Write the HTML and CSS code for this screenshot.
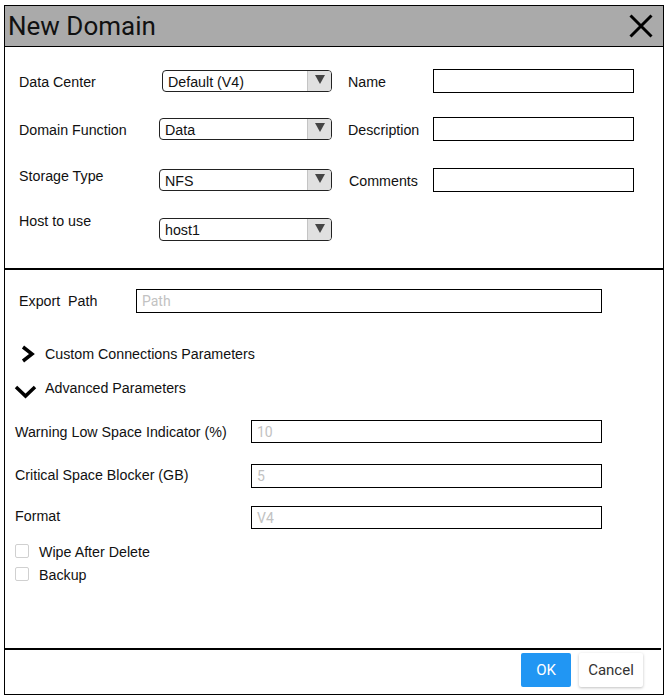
FILE: index.html
```html
<!DOCTYPE html>
<html>
<head>
<meta charset="utf-8">
<link rel="stylesheet" href="styles.css">
</head>
<body>
<div class="dialog">
  <div class="header">
    <span class="title">New Domain</span>
    <svg class="close" width="24" height="24" viewBox="0 0 24 24"><path d="M1.5 1.5 L22.5 22.5 M22.5 1.5 L1.5 22.5" stroke="#000" stroke-width="3" fill="none"/></svg>
  </div>

  <div class="top">
    <div class="row r1">
      <div class="lbl">Data Center</div>
      <div class="select s-dc"><span class="sv">Default (V4)</span><span class="arrow"><svg width="10" height="9" viewBox="0 0 10 9"><path d="M0 0 L10 0 L5 9 Z" fill="#444"/></svg></span></div>
      <div class="lbl2">Name</div>
      <div class="inp"></div>
    </div>
    <div class="row r2">
      <div class="lbl">Domain Function</div>
      <div class="select"><span class="sv">Data</span><span class="arrow"><svg width="10" height="9" viewBox="0 0 10 9"><path d="M0 0 L10 0 L5 9 Z" fill="#444"/></svg></span></div>
      <div class="lbl2">Description</div>
      <div class="inp"></div>
    </div>
    <div class="row r3">
      <div class="lbl lbl-high">Storage Type</div>
      <div class="select"><span class="sv">NFS</span><span class="arrow"><svg width="10" height="9" viewBox="0 0 10 9"><path d="M0 0 L10 0 L5 9 Z" fill="#444"/></svg></span></div>
      <div class="lbl2 lbl-c">Comments</div>
      <div class="inp"></div>
    </div>
    <div class="row r4">
      <div class="lbl lbl-higher">Host to use</div>
      <div class="select s-host"><span class="sv">host1</span><span class="arrow"><svg width="10" height="9" viewBox="0 0 10 9"><path d="M0 0 L10 0 L5 9 Z" fill="#444"/></svg></span></div>
    </div>
  </div>

  <div class="bottom">
    <div class="export">
      <div class="elbl">Export&nbsp; Path</div>
      <div class="binp export-inp"><span class="ph">Path</span></div>
    </div>
    <div class="toggle t-custom">
      <svg width="14" height="18" viewBox="0 0 14 18"><path d="M2 2 L11 9 L2 16" stroke="#000" stroke-width="3.5" fill="none"/></svg>
      <span>Custom Connections Parameters</span>
    </div>
    <div class="toggle t-adv">
      <svg width="23" height="14" viewBox="0 0 23 14"><path d="M2 2 L11.5 11 L21 2" stroke="#000" stroke-width="3.5" fill="none"/></svg>
      <span>Advanced Parameters</span>
    </div>
    <div class="param p1">
      <div class="plbl">Warning Low Space Indicator (%)</div>
      <div class="binp pinp"><span class="ph">10</span></div>
    </div>
    <div class="param p2">
      <div class="plbl">Critical Space Blocker (GB)</div>
      <div class="binp pinp"><span class="ph">5</span></div>
    </div>
    <div class="param p3">
      <div class="plbl">Format</div>
      <div class="binp pinp"><span class="ph">V4</span></div>
    </div>
    <div class="check c1"><span class="box"></span><span>Wipe After Delete</span></div>
    <div class="check c2"><span class="box"></span><span>Backup</span></div>
  </div>

  <div class="footer-line"></div>
  <div class="footer">
    <button class="btn ok">OK</button>
    <button class="btn cancel">Cancel</button>
  </div>
</div>
</body>
</html>
```

FILE: styles.css
```css
html, body {
  margin: 0;
  padding: 0;
  background: #fff;
}
body {
  font-family: "Liberation Sans", Arial, sans-serif;
  font-size: 14.25px;
  color: #111;
}
.dialog {
  margin: 5px 0 0 4px;
  width: 660px;
  height: 690px;
  box-sizing: border-box;
  border: 1px solid #000;
  display: flex;
  flex-direction: column;
}
.header {
  height: 40px;
  background: #aaaaaa;
  border-bottom: 1px solid #000;
  display: flex;
  align-items: center;
  justify-content: space-between;
  padding: 0 10px 0 3px;
  flex: none;
}
.title {
  font-family: Roboto, sans-serif;
  font-size: 26px;
  color: #111;
  line-height: 40px;
}
.top {
  flex: none;
  padding: 22px 0 0 14px;
  height: 223px;
  box-sizing: border-box;
  border-bottom: 2px solid #000;
}
.row {
  display: flex;
  align-items: center;
  height: 24px;
}
.r2 { margin-top: 24px; }
.r3 { margin-top: 27px; }
.r4 { margin-top: 24px; }
.lbl {
  width: 140px;
  line-height: 24px;
  margin-top: 1px;
}
.lbl-high {
  align-self: flex-start;
  line-height: 14px;
}
.lbl-higher {
  align-self: flex-start;
  line-height: 14px;
  margin-top: -2px;
}
.select {
  width: 173px;
  height: 22px;
  box-sizing: border-box;
  border: 1px solid #222;
  border-radius: 4px;
  display: flex;
  align-items: stretch;
  overflow: hidden;
}
.s-dc {
  width: 170px;
  margin-left: 3px;
}
.s-host {
  height: 23px;
  margin-top: 3px;
}
.sv {
  flex: 1;
  padding-left: 5px;
  line-height: 22px;
  color: #111;
}
.arrow {
  width: 24px;
  background: #e0e0e0;
  border-left: 1px solid #c4c4c4;
  display: flex;
  align-items: center;
  justify-content: center;
  padding-bottom: 3px;
  box-sizing: border-box;
}
.lbl2 {
  margin-left: 16px;
  width: 85px;
  line-height: 24px;
  margin-top: 1px;
}
.lbl-c {
  margin-left: 17px;
  width: 84px;
  margin-top: 2px;
}
.inp {
  width: 201px;
  height: 24px;
  box-sizing: border-box;
  border: 1px solid #000;
}
.bottom {
  flex: 1;
  display: flex;
  flex-direction: column;
  padding-top: 19px;
}
.binp {
  height: 24px;
  box-sizing: border-box;
  border: 1px solid #000;
  display: flex;
  align-items: center;
  padding-left: 5px;
}
.ph {
  font-family: Roboto, sans-serif;
  font-size: 14px;
  color: #c2c2c2;
}
.export {
  display: flex;
  align-items: center;
  padding-left: 14px;
}
.elbl {
  width: 117px;
}
.export-inp {
  width: 466px;
}
.toggle {
  display: flex;
  align-items: center;
}
.toggle span {
  line-height: 18px;
}
.t-custom {
  margin-top: 32px;
  padding-left: 16px;
  height: 18px;
}
.t-custom span { margin-left: 10px; }
.t-adv {
  margin-top: 17px;
  padding-left: 9px;
  height: 18px;
}
.t-adv svg { margin-top: 6px; }
.t-adv span { margin-left: 8px; margin-top: -2px; }
.param {
  display: flex;
  align-items: center;
  padding-left: 10px;
}
.plbl {
  width: 236px;
}
.pinp {
  width: 351px;
  height: 23px;
}
.p1 { margin-top: 22px; }
.p2 { margin-top: 21px; }
.p2 .pinp { height: 24px; }
.p3 { margin-top: 18px; }
.p3 .plbl { margin-top: -3px; }
.p2 .plbl { margin-top: -2px; }
.check {
  display: flex;
  align-items: center;
  padding-left: 10px;
  height: 14px;
}
.c1 { margin-top: 15px; }
.c2 { margin-top: 9px; }
.box {
  width: 14px;
  height: 14px;
  box-sizing: border-box;
  border: 1px solid #d0d0d0;
  border-radius: 2px;
  margin-right: 10px;
}
.check span:last-child {
  margin-top: 2px;
}
.footer-line {
  flex: none;
  height: 2px;
  background: #000;
  margin-right: 2px;
}
.footer {
  flex: none;
  height: 44px;
  display: flex;
  justify-content: flex-end;
  align-items: flex-start;
  padding: 3px 20px 0 0;
  box-sizing: border-box;
  gap: 8px;
}
.btn {
  font-family: Roboto, sans-serif;
  font-size: 15px;
  height: 34px;
  border: none;
  border-radius: 2px;
  padding: 0;
}
.ok {
  width: 50px;
  background: #2196f3;
  color: #fff;
}
.cancel {
  width: 64px;
  background: #fff;
  color: #333;
  box-shadow: 0 1px 3px rgba(0,0,0,0.25);
}
```
